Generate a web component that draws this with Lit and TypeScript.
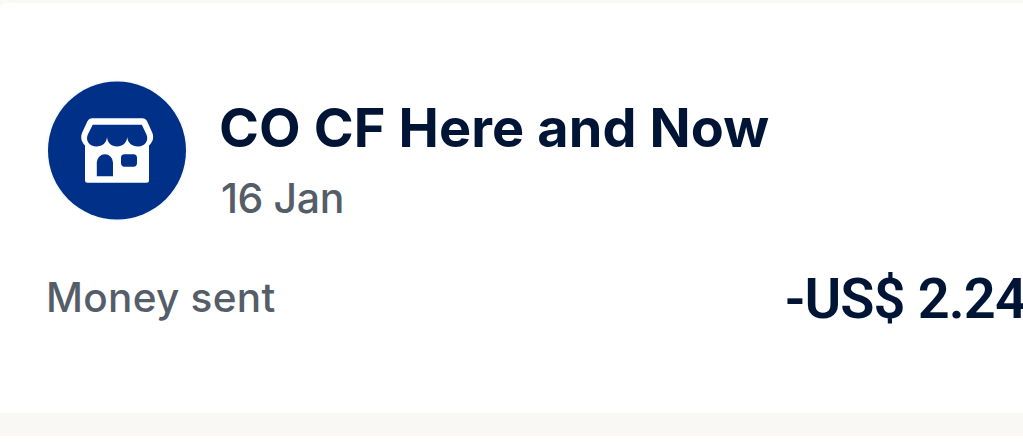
import { LitElement, html, css } from "lit";
import { customElement, property } from "lit/decorators.js";

@customElement("store-avatar")
class StoreAvatar extends LitElement {
  static styles = css`
    :host {
      display: block;
      flex: none;
      width: 138px;
      height: 139px;
    }

    svg {
      display: block;
      overflow: visible;
    }
  `;

  render() {
    return html`
      <svg width="138" height="139" viewBox="48 81 138 139">
        <circle cx="117" cy="150.5" r="71" fill="#f8fafd" />
        <circle cx="117" cy="150.5" r="69" fill="#003087" />
        <path
          fill="#fff"
          d="M92.3 118.2H142.2Q145.6 118.2 147.1 121.2L152.3 132.8Q154.2 137.6 152 141.6Q150.8 144 149 145.6V180.2Q149 182.7 146.5 182.7H87.5Q85 182.7 85 180.2V145.6Q83.2 144 82.2 141.6Q80.2 137.6 82.1 132.8L87.4 121.2Q88.9 118.2 92.3 118.2Z"
        />
        <path
          fill="#003087"
          d="M92.7 124.7H141.8L146.6 134.8C149 141 144.5 146.5 138.2 146.5C132 146.5 127.6 142.8 127.2 137C126.8 142.8 122.6 146.5 117 146.5C111.4 146.5 107.4 142.8 107 137C106.6 142.8 102.4 146.5 96.4 146.5C89.8 146.5 85.2 141 87.7 134.8Z"
        />
        <path fill="#003087" d="M96.8 176.3V162.4A8.1 8.1 0 0 1 113 162.4V176.3Z" />
        <rect x="121" y="154.3" width="16" height="12.4" rx="3.6" fill="#003087" />
      </svg>
    `;
  }
}

@customElement("app-root")
class AppRoot extends LitElement {
  static styles = css`
    :host {
      display: block;
      box-sizing: border-box;
      height: 446px;
      padding-top: 3px;
      overflow: hidden;
      background: linear-gradient(#f9f8f4 436px, #fff 436px);
      font-family: Inter, "Liberation Sans", sans-serif;
      white-space: nowrap;
    }

    .card {
      box-sizing: border-box;
      height: 410px;
      padding: 78px 0 0 48px;
      border-top-left-radius: 6px;
      background: #fff;
    }

    .header {
      display: flex;
      gap: 33px;
    }

    .title {
      margin-top: 15px;
      font-size: 54px;
      line-height: 64px;
      font-weight: 700;
      letter-spacing: 0.12px;
      color: #001435;
    }

    .date {
      margin: 13px 0 0 2px;
      font-size: 41px;
      line-height: 50px;
      font-weight: 450;
      letter-spacing: -0.4px;
      color: #545d68;
    }

    .summary {
      display: flex;
      justify-content: space-between;
      align-items: flex-start;
      margin-top: 43px;
    }

    .label {
      margin: 7px 0 0 -2px;
      font-size: 40.5px;
      line-height: 50px;
      font-weight: 450;
      letter-spacing: 0.28px;
      color: #545d68;
    }

    .amount {
      margin-right: -3px;
      font-family: Roboto, Inter, sans-serif;
      font-size: 56px;
      line-height: 66px;
      font-weight: 600;
      letter-spacing: -0.9px;
      color: #001435;
    }
  `;

  @property() name = "CO CF Here and Now";
  @property() date = "16 Jan";
  @property() label = "Money sent";
  @property() amount = "-US$ 2.24";

  render() {
    return html`
      <div class="card">
        <div class="header">
          <store-avatar></store-avatar>
          <div>
            <div class="title">${this.name}</div>
            <div class="date">${this.date}</div>
          </div>
        </div>
        <div class="summary">
          <span class="label">${this.label}</span>
          <span class="amount">${this.amount}</span>
        </div>
      </div>
    `;
  }
}
